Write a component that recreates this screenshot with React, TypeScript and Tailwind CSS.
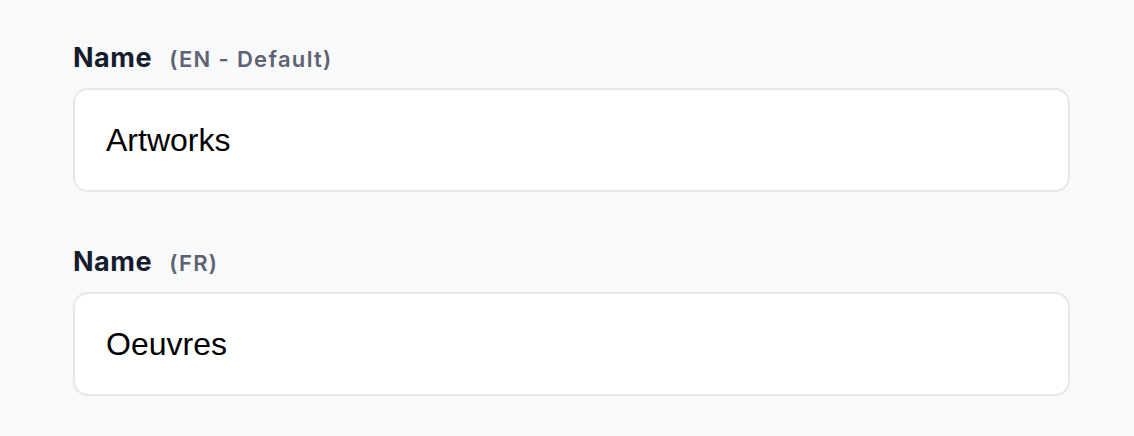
import React from "react";

function Field({ sub, value }: { sub: string; value: string }) {
  return (
    <div className="flex flex-col">
      <div className="flex items-baseline gap-[17px] leading-[32px] font-['Inter',sans-serif]">
        <span className="text-[27px] font-bold tracking-[0.02em] text-[#161c2b]">Name</span>
        <span className="text-[22px] font-semibold tracking-[0.06em] text-[#5d6370]">{sub}</span>
      </div>
      <div className="mt-[13px] h-[104px] w-[997px] rounded-[15px] border-2 border-[#e5e7eb] bg-white flex items-center pl-[31px]">
        <span className="font-['Liberation_Sans',Arial,sans-serif] text-[32px] text-black leading-none">{value}</span>
      </div>
    </div>
  );
}

export default function App() {
  return (
    <div className="min-h-[436px] w-[1134px] bg-[#f8f9fb] pl-[73px] pt-[42px] flex flex-col gap-[54px]">
      <Field sub="(EN - Default)" value="Artworks" />
      <Field sub="(FR)" value="Oeuvres" />
    </div>
  );
}
